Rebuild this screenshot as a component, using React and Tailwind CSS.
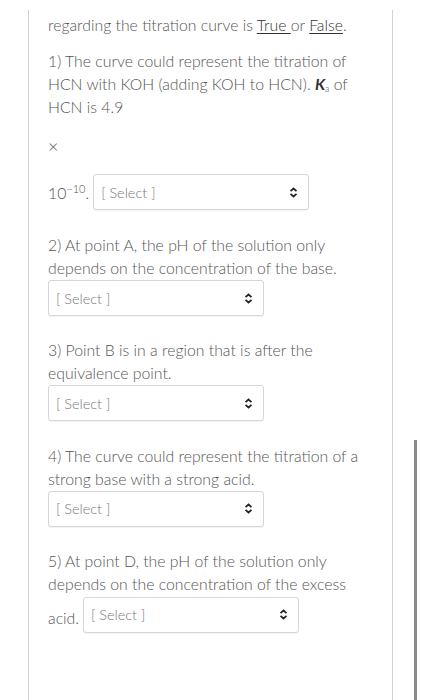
import React from "react";

function Chevrons() {
  return (
    <svg width="9" height="11" viewBox="0 0 9 11" className="shrink-0">
      <path d="M1.5 4.2 L4.5 1.5 L7.5 4.2 M1.5 6.8 L4.5 9.5 L7.5 6.8" fill="none" stroke="#222" strokeWidth="1.7" />
    </svg>
  );
}

function SelectBox({ className = "" }) {
  return (
    <span
      className={
        "inline-flex items-center justify-between w-[216px] h-[36px] pl-[7px] pr-[10px] border border-[#d6d6d6] rounded-[3px] bg-white align-middle shadow-[0_1px_1px_rgba(0,0,0,0.05)] " +
        className
      }
    >
      <span className="text-[14.5px] font-light text-[#777]">[ Select ]</span>
      <Chevrons />
    </span>
  );
}

export default function App() {
  return (
    <div className="min-h-[700px] bg-white font-['Lato','Open_Sans',sans-serif] font-light text-[#555] text-[15.8px] leading-[23px]">
      <div className="relative h-[700px]">
        <div className="absolute right-[4px] top-[430px] bottom-0 w-[3px] bg-[#8a8a8a]" />
        <div className="ml-[28px] w-[365px] h-[700px] mt-[10px] border-l border-r border-[#d2d2d2] pl-[19px] pr-[18px]">
          <p className="pt-[3px]">
            regarding the titration curve is{" "}
            <span className="underline underline-offset-[2px] text-[#333]">True </span>or{" "}
            <span className="underline underline-offset-[2px] text-[#333]">False</span>.
          </p>

          <p className="mt-[13px]">
            1) The curve could represent the titration of HCN with KOH (adding KOH to HCN).{" "}
            <b className="italic font-bold text-[#333]">K</b>
            <sub className="text-[9px]">a</sub> of HCN is 4.9
          </p>
          <p className="mt-[17px] text-[18px]">×</p>
          <div className="mt-[16px] flex items-center">
            <span>
              10<sup className="text-[11px]">−10</sup>.
            </span>
            <SelectBox className="ml-[4px]" />
          </div>

          <p className="mt-[23px]">2) At point A, the pH of the solution only depends on the concentration of the base.</p>
          <SelectBox className="mt-[1px] flex" />

          <p className="mt-[22px]">3) Point B is in a region that is after the equivalence point.</p>
          <SelectBox className="mt-[1px] flex" />

          <p className="mt-[22.5px]">4) The curve could represent the titration of a strong base with a strong acid.</p>
          <SelectBox className="mt-[1px] flex" />

          <p className="mt-[22px]">
            5) At point D, the pH of the solution only depends on the concentration of the excess
          </p>
          <div className="mt-[2px] flex items-end">
            <span className="mb-[4px]">acid.</span>
            <SelectBox className="ml-[4px]" />
          </div>
        </div>
      </div>
    </div>
  );
}
